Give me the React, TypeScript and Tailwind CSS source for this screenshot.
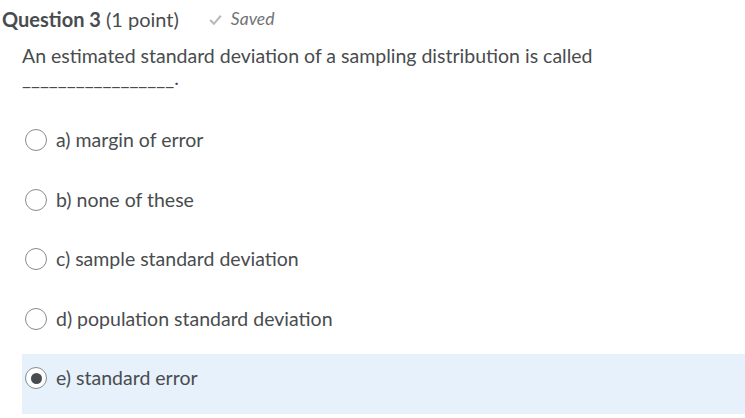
import { useState } from 'react';

const options = [
  { id: 'a', label: 'a) margin of error' },
  { id: 'b', label: 'b) none of these' },
  { id: 'c', label: 'c) sample standard deviation' },
  { id: 'd', label: 'd) population standard deviation' },
  { id: 'e', label: 'e) standard error' },
];

export default function App() {
  const [selected, setSelected] = useState('e');

  return (
    <div className="w-[745px] h-[418px] bg-white text-[#494c4e] font-['Lato','Noto_Sans',sans-serif] overflow-hidden">
      {/* Header */}
      <div className="flex items-center h-[38px] pl-[2px]">
        <h2 className="text-[20px] font-bold">Question 3</h2>
        <span className="text-[20px] ml-[5px]">(1 point)</span>
        <span className="flex items-center ml-[29px] text-[17.5px] italic text-[#6e7376]">
          <svg width="15" height="15" viewBox="0 0 14 14" className="mr-[8px]">
            <path d="M2 7.5 L5.5 11 L12 3.5" fill="none" stroke="#b5b9bc" strokeWidth="1.8" />
          </svg>
          Saved
        </span>
      </div>

      {/* Question */}
      <div className="pl-[22px] pt-[4px] text-[19.5px] leading-[27px]">
        <p>An estimated standard deviation of a sampling distribution is called</p>
        <p className="mt-[-5px]">_________________.</p>
      </div>

      {/* Options */}
      <div className="mt-[25px] pl-[22px]">
        {options.map((o) => {
          const on = selected === o.id;
          return (
            <label
              key={o.id}
              onClick={() => setSelected(o.id)}
              className={`flex items-start h-[59.5px] pt-[13px] cursor-pointer ${on ? 'bg-[#e6f1fb]' : ''}`}
            >
              <div className="flex items-center h-[22px]">
                <span className="ml-[3px] w-[22px] h-[22px] rounded-full border border-[#868c8f] bg-white flex items-center justify-center">
                  {on && <span className="w-[11px] h-[11px] rounded-full bg-[#494c4e]" />}
                </span>
                <span className="ml-[9px] text-[19.5px]">{o.label}</span>
              </div>
            </label>
          );
        })}
      </div>
    </div>
  );
}
